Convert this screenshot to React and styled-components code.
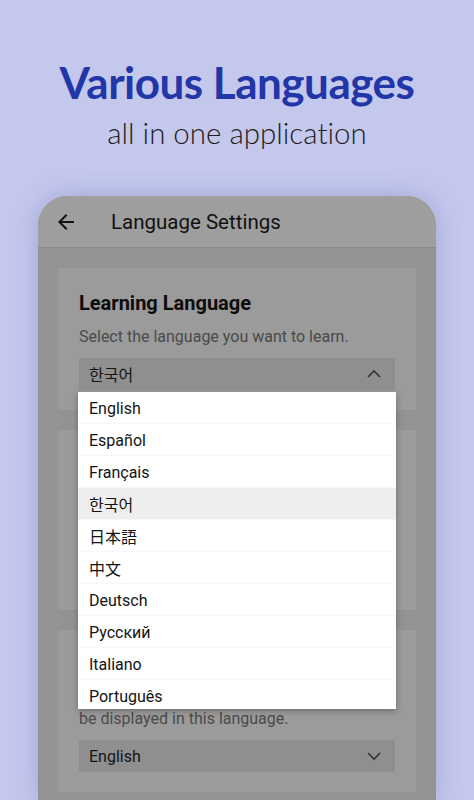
import React from 'react'
import styled, { createGlobalStyle } from 'styled-components'

const GlobalStyle = createGlobalStyle`
  html, body {
    margin: 0;
    padding: 0;
    height: 800px;
    overflow: hidden;
    background: #c4c8ed;
  }
  * { box-sizing: border-box; }
`

const Page = styled.div`
  height: 800px;
  overflow: hidden;
  display: flex;
  flex-direction: column;
  align-items: center;
`

const Header = styled.header`
  padding-top: 56px;
  display: flex;
  flex-direction: column;
  align-items: center;
  font-variant-ligatures: none;
`

const Title = styled.h1`
  margin: 0;
  font-family: Lato, 'Noto Sans', sans-serif;
  font-weight: 700;
  font-size: 44px;
  line-height: 52px;
  letter-spacing: -0.5px;
  color: #2236a8;
`

const Subtitle = styled.p`
  margin: 6px 0 0;
  font-family: Lato, 'Noto Sans', sans-serif;
  font-weight: 300;
  font-size: 29.5px;
  line-height: 38px;
  color: #1d1d1d;
`

const Phone = styled.div`
  margin-top: 44px;
  width: 398px;
  flex: 1;
  border-radius: 30px 30px 0 0;
  background: #939393;
  box-shadow: 0 0 24px rgba(70, 76, 150, 0.28);
  overflow: hidden;
  font-family: Roboto, 'Noto Sans', 'Noto Sans CJK KR', sans-serif;
`

const AppBar = styled.div`
  height: 52px;
  display: flex;
  align-items: center;
  padding-left: 16px;
  background: #9e9e9e;
  border-bottom: 1px solid #8b8b8b;
`

const AppTitle = styled.span`
  margin-left: 33px;
  font-size: 20.5px;
  font-weight: 400;
  color: #111;
`

const Body = styled.div`
  padding: 20px;
  display: flex;
  flex-direction: column;
  gap: 20px;
`

const Card = styled.section`
  position: relative;
  background: #9b9b9b;
  padding: ${p => p.$top || 20}px 21px 20px;
  min-height: ${p => p.$minHeight || 0}px;
  display: flex;
  flex-direction: column;
`

const CardTitle = styled.h2`
  margin: 0;
  font-size: 20px;
  line-height: 30px;
  font-weight: 700;
  color: #0c0c0c;
`

const CardDesc = styled.p`
  margin: 8px 0 0;
  font-size: 16px;
  line-height: 22px;
  color: #4a4a4a;
`

const Select = styled.div`
  margin-top: 10px;
  height: 32px;
  display: flex;
  align-items: center;
  justify-content: space-between;
  padding: 0 9px 0 10px;
  background: #8f8f8f;
  font-size: 16px;
  color: #151515;
`

const Dropdown = styled.ul`
  position: absolute;
  left: 20px;
  right: 20px;
  top: 124px;
  z-index: 5;
  margin: 0;
  padding: 0;
  list-style: none;
  max-height: 317px;
  overflow: hidden;
  background: #fff;
  box-shadow: 0 2px 6px rgba(0, 0, 0, 0.3);
`

const Option = styled.li`
  height: 32px;
  display: flex;
  align-items: center;
  padding: 1px 0 0 11px;
  font-size: 16px;
  color: #141414;
  background: ${p => (p.$active ? '#eeeeee' : '#fff')};
  border-bottom: 1px solid #f7f7f7;
  font-family: Roboto, 'Noto Sans CJK KR', 'Noto Sans CJK JP', sans-serif;
`

const BackIcon = () => (
  <svg width='24' height='24' viewBox='0 0 24 24'>
    <path fill='#111' d='M20 11H7.83l5.59-5.59L12 4l-8 8 8 8 1.41-1.41L7.83 13H20v-2z' />
  </svg>
)

const Chevron = ({ up }) => (
  <svg width='24' height='24' viewBox='0 0 24 24'>
    <polyline
      points={up ? '6,15 12,9 18,15' : '6,9 12,15 18,9'}
      fill='none'
      stroke='#333'
      strokeWidth='1.6'
    />
  </svg>
)

const languages = ['English', 'Español', 'Français', '한국어', '日本語', '中文', 'Deutsch', 'Русский', 'Italiano', 'Português']

const App = () => (
  <Page>
    <GlobalStyle />
    <Header>
      <Title>Various Languages</Title>
      <Subtitle>all in one application</Subtitle>
    </Header>

    <Phone>
      <AppBar>
        <BackIcon />
        <AppTitle>Language Settings</AppTitle>
      </AppBar>

      <Body>
        <Card>
          <CardTitle>Learning Language</CardTitle>
          <CardDesc>Select the language you want to learn.</CardDesc>
          <Select>
            <span>한국어</span>
            <Chevron up />
          </Select>
          <Dropdown>
            {languages.map(lang => (
              <Option key={lang} $active={lang === '한국어'}>{lang}</Option>
            ))}
          </Dropdown>
        </Card>

        <Card $minHeight={180}>
          <CardTitle>Difficulty Level</CardTitle>
          <CardDesc>Choose how difficult the sentences and words should be.</CardDesc>
          <Select>
            <span>Beginner</span>
            <Chevron />
          </Select>
        </Card>

        <Card $top={18}>
          <CardTitle>Native Language</CardTitle>
          <CardDesc>Menus and explanations will<br />be displayed in this language.</CardDesc>
          <Select>
            <span>English</span>
            <Chevron />
          </Select>
        </Card>
      </Body>
    </Phone>
  </Page>
)

export default App
